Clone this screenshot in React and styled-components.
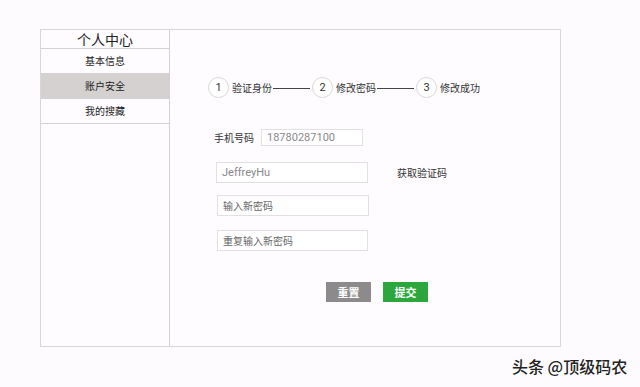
import styled, { createGlobalStyle } from "styled-components";

const Global = createGlobalStyle`
    html, body {
        margin: 0;
        padding: 0;
        background: #fdfbfd;
        font-family: "Noto Sans CJK SC", "Noto Sans", sans-serif;
    }
`

const Page = styled.div`
    width: 640px;
    height: 387px;
    box-sizing: border-box;
    padding: 29px 0 0 40px;
    position: relative;
    overflow: hidden;
`

const Frame = styled.div`
    width: 521px;
    height: 318px;
    box-sizing: border-box;
    border: 1px solid #d9d6d9;
    display: flex;
    background: #fefcfe;
`

const Sidebar = styled.div`
    width: 128px;
    border-right: 1px solid #d4d1d4;
    display: flex;
    flex-direction: column;
`

const SideTitle = styled.div`
    height: 18px;
    line-height: 18px;
    text-align: center;
    font-size: 14px;
    color: #222;
    border-bottom: 1px solid #d4d1d4;
`

const SideItem = styled.div`
    height: 24px;
    line-height: 24px;
    text-align: center;
    font-size: 10px;
    color: #222;
    border-bottom: 1px solid #d4d1d4;
    background: ${p => (p.active ? "#d5d1d1" : "#fefcfe")};
`

const Main = styled.div`
    flex: 1;
    padding: 46px 0 0 38px;
    display: flex;
    flex-direction: column;
`

const Steps = styled.div`
    display: flex;
    align-items: center;
    height: 22px;
`

const Circle = styled.div`
    width: 21px;
    height: 21px;
    box-sizing: border-box;
    border-radius: 50%;
    border: 1px solid #d8d6d8;
    background: #fff;
    display: flex;
    align-items: center;
    justify-content: center;
    font-size: 11px;
    color: #333;
    font-family: Roboto, "Noto Sans", sans-serif;
`

const StepText = styled.span`
    font-size: 10px;
    color: #333;
    margin-left: 3px;
`

const Line = styled.div`
    width: 37px;
    height: 1px;
    background: #444;
    margin: 2px 2px 0 1px;
`

const Form = styled.div`
    margin-top: 31px;
    display: flex;
    flex-direction: column;
    padding-left: 6px;
`

const Row = styled.div`
    display: flex;
    align-items: center;
    margin-bottom: ${p => p.gap}px;
    padding-left: ${p => p.indent || 0}px;
`

const Label = styled.span`
    font-size: 10px;
    color: #333;
    margin-right: 7px;
`

const Field = styled.div`
    width: ${p => p.w}px;
    height: ${p => p.h}px;
    box-sizing: border-box;
    border: 1px solid #e2e0e2;
    background: #fff;
    font-size: ${p => (p.latin ? 11 : 10)}px;
    color: ${p => (p.dark ? "#666" : "#8a888a")};
    padding-left: 5px;
    display: flex;
    align-items: center;
    font-family: ${p => (p.latin ? "Roboto, sans-serif" : `"Noto Sans CJK SC", sans-serif`)};
`

const Code = styled.span`
    font-size: 10px;
    color: #333;
    margin-left: 29px;
`

const Buttons = styled.div`
    display: flex;
    gap: 12px;
    margin-top: 31px;
    padding-left: 118px;
`

const Button = styled.div`
    width: 45px;
    height: 20px;
    background: ${p => p.bg};
    color: #fff;
    font-size: 11px;
    font-weight: bold;
    display: flex;
    align-items: center;
    justify-content: center;
`

const Watermark = styled.div`
    position: absolute;
    left: 512px;
    top: 354px;
    font-size: 16px;
    color: #222;
    font-weight: 500;
    text-shadow: 0 0 2px #fff, 1px 1px 1px #fff;
`

const steps = ["验证身份", "修改密码", "修改成功"]

const App = () => {
    return (
        <Page>
            <Global />
            <Frame>
                <Sidebar>
                    <SideTitle>个人中心</SideTitle>
                    <SideItem>基本信息</SideItem>
                    <SideItem active>账户安全</SideItem>
                    <SideItem>我的搜藏</SideItem>
                </Sidebar>
                <Main>
                    <Steps>
                        {steps.map((s, i) => (
                            <>
                                <Circle key={"c" + i}>{i + 1}</Circle>
                                <StepText key={"t" + i}>{s}</StepText>
                                {i < 2 && <Line key={"l" + i} />}
                            </>
                        ))}
                    </Steps>
                    <Form>
                        <Row gap={16}>
                            <Label>手机号码</Label>
                            <Field w={102} h={17} latin>18780287100</Field>
                        </Row>
                        <Row gap={12} indent={2}>
                            <Field w={152} h={21} latin>JeffreyHu</Field>
                            <Code>获取验证码</Code>
                        </Row>
                        <Row gap={14} indent={3}>
                            <Field w={152} h={21} dark>输入新密码</Field>
                        </Row>
                        <Row gap={0} indent={3}>
                            <Field w={151} h={21} dark>重复输入新密码</Field>
                        </Row>
                    </Form>
                    <Buttons>
                        <Button bg="#8c8a8b">重置</Button>
                        <Button bg="#2ca73e">提交</Button>
                    </Buttons>
                </Main>
            </Frame>
            <Watermark>头条 @顶级码农</Watermark>
        </Page>
    )
}

export default App
